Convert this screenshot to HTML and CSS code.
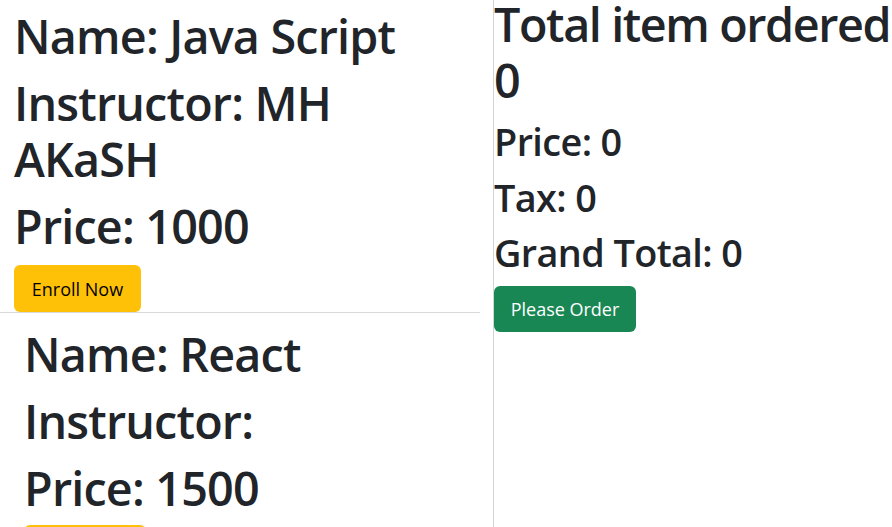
FILE: index.html
```html
<!DOCTYPE html>
<html lang="en">
<head>
<meta charset="utf-8">
<title>Courses</title>
<link rel="stylesheet" href="styles.css">
</head>
<body>
<div class="layout">
  <div class="courses">
    <div class="course course-first">
      <h1 class="title">Name: Java Script</h1>
      <h1 class="title">Instructor: MH AKaSH</h1>
      <h1 class="title">Price: 1000</h1>
      <button class="btn btn-warning">Enroll Now</button>
    </div>
    <div class="course course-second">
      <h1 class="title">Name: React</h1>
      <h1 class="title">Instructor: </h1>
      <h1 class="title">Price: 1500</h1>
      <button class="btn btn-warning">Enroll Now</button>
    </div>
  </div>
  <div class="cart">
    <h1 class="title cart-title">Total item ordered 0</h1>
    <h2 class="subtitle">Price: 0</h2>
    <h2 class="subtitle">Tax: 0</h2>
    <h2 class="subtitle">Grand Total: 0</h2>
    <button class="btn btn-success">Please Order</button>
  </div>
</div>
</body>
</html>
```
FILE: styles.css
```css
html, body {
  margin: 0;
  padding: 0;
  background: #fff;
  color: #212529;
  font-family: "Open Sans", "Noto Sans", sans-serif;
  height: 100%;
  overflow: hidden;
}

.layout {
  display: flex;
  height: 100%;
}

.courses {
  width: 493px;
  flex: 0 0 493px;
  border-right: 1px solid #d4d4d4;
}

.cart {
  flex: 1;
  margin-top: -4px;
  min-width: 0;
}

.course-first {
  width: 466px;
  padding: 8px 0 0 14px;
  border-bottom: 1px solid #d9d9d9;
}

.course-second {
  padding: 13px 0 0 24px;
}

.course-second .title:nth-of-type(3) {
  margin-bottom: 9px;
}

.title {
  font-size: 46.7px;
  line-height: 56px;
  font-weight: 600;
  letter-spacing: -0.8px;
  margin: 0 0 11px;
}

.cart-title {
  letter-spacing: -1.4px;
}

.subtitle {
  font-size: 37.8px;
  line-height: 45.6px;
  font-weight: 600;
  letter-spacing: -0.6px;
  margin: 0 0 10px;
}

.btn {
  display: block;
  height: 47px;
  padding: 0;
  font-family: inherit;
  font-size: 18px;
  white-space: nowrap;
  text-align: center;
  border: 0;
  border-radius: 6px;
}

.btn-warning {
  background: #ffc107;
  color: #000;
  width: 127px;
}

.course-second .btn-warning {
  width: 122px;
}

.btn-success {
  background: #198754;
  color: #fff;
  width: 142px;
  height: 46px;
}
```
